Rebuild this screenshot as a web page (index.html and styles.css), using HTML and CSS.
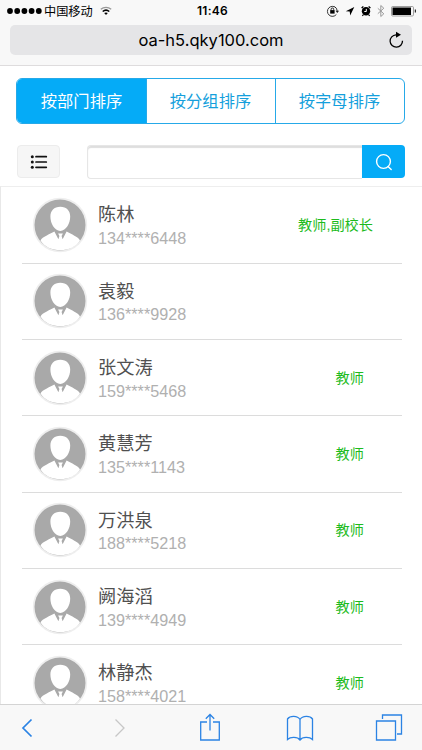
FILE: index.html
```html
<!DOCTYPE html>
<html lang="zh-CN">
<head>
<meta charset="utf-8">
<title>oa-h5.qky100.com</title>
<link rel="stylesheet" href="styles.css">
</head>
<body>
<svg width="0" height="0" class="defs">
  <symbol id="avatar" viewBox="0 0 56 56">
    <circle cx="28" cy="28" r="27.200" fill="#eeeeee"/>
    <circle cx="28" cy="28" r="25.500" fill="#a9a9a9"/>
    <path d="M28.300 9.800c6.300 0 9.900 4 9.900 9.800 0 7-4 14.300-9.900 14.300s-9.900-7.300-9.900-14.300c0-5.800 3.600-9.800 9.900-9.800z" fill="#fff"/>
    <path d="M8.500 43.500c2-4 9-6 13.900-9l4 7.700 1-3.200-1.300-2.400h4.800L29.600 39l1 3.200 4-7.700c4.900 3 11.400 5 13.400 9-4 6.300-11 9.700-19.700 9.700s-15.800-3.400-19.800-9.700z" fill="#fff"/>
  </symbol>
</svg>
<div class="screen">
  <header class="chrome">
    <div class="status">
      <div class="carrier">
        <svg width="36" height="8" viewBox="0 0 36 8"><circle cx="3" cy="4" r="2.900"/><circle cx="10.200" cy="4" r="2.900"/><circle cx="17.400" cy="4" r="2.900"/><circle cx="24.600" cy="4" r="2.900"/><circle cx="31.800" cy="4" r="2.900"/></svg>
        <span class="carrier-name">中国移动</span>
        <svg class="wifi" width="12" height="10" viewBox="0 0 12 10" fill="none" stroke="#000"><path d="M.8 3.300c3-2.700 7.400-2.700 10.400 0" stroke="#999" stroke-width="1.200"/><path d="M2.700 5.500c2-1.700 4.600-1.700 6.600 0" stroke-width="1.500"/><path d="M4.200 7.100c1-.9 2.600-.9 3.600 0L6 9z" fill="#000" stroke="none"/></svg>
      </div>
      <time class="clock">11:46</time>
      <svg class="indicators" width="90" height="14" viewBox="0 0 90 14" fill="none" stroke="#222">
        <path d="M10.300 4.200a5 5 0 1 0 .1 6.200M8.600 2.700a5 5 0 0 1 2.600 4.300" stroke-width=".9"/><path d="M9.500 6.800h3.600l-1.800 2.300z" fill="#222" stroke="none"/><path d="M5.100 6.300V5.300a1.300 1.300 0 0 1 2.600 0v1"/><path d="M4.200 6.100h4.400v3.500H4.200z" fill="#000" stroke="none"/>
        <path d="M28.300 3l-8.500 4.200 3.900.4.500 4z" fill="#000" stroke="none"/>
        <circle cx="40" cy="7.200" r="4.200" fill="#000" stroke="none"/><path d="M35.600 4l1.800-1.600M42.600 2.400l1.800 1.600M37.200 10.900l-.8 1M42.800 10.900l.8 1" stroke="#000" stroke-width="1.300"/><path d="M40.300 4.900v2.600h-2" stroke="#fff"/>
        <path d="M51.800 4.300l6 5.500-3 2.700v-11l3 2.700-6 5.500" stroke="#999"/>
        <rect x="65.500" y="2.500" width="22" height="9.500" rx="1.200" stroke="#888" stroke-width=".8"/><rect x="66.500" y="3.500" width="18.500" height="7.500" fill="#000" stroke="none"/><path d="M89.300 5.500v3" stroke="#000"/>
      </svg>
    </div>
    <div class="address">
      <span class="url">oa-h5.qky100.com</span>
      <svg class="reload" width="18" height="18" viewBox="0 0 18 18" fill="none" stroke="#000" stroke-width="1.300"><path d="M11 3.800H9a6.200 6.200 0 1 0 6.500 6"/><path d="M9 .8l5 3-5 3z" fill="#000" stroke="none"/></svg>
    </div>
  </header>
  <main class="page">
    <nav class="tabs"><a class="tab active">按部门排序</a><a class="tab">按分组排序</a><a class="tab">按字母排序</a></nav>
    <div class="tools">
      <button class="menu"><svg width="18" height="16" viewBox="0 0 18 16" stroke="#111" stroke-width="1.700" stroke-linecap="round"><path d="M6 2.700h10.300M6 8h10.300M6 13.300h10.300"/><g stroke="none" fill="#111"><circle cx="2.300" cy="2.700" r="1.500"/><circle cx="2.300" cy="8" r="1.500"/><circle cx="2.300" cy="13.300" r="1.500"/></g></svg></button>
      <div class="search">
        <div class="field"></div>
        <button class="go"><svg width="18" height="18" viewBox="0 0 18 18" fill="none" stroke="#fff" stroke-width="1.400" stroke-linecap="round"><circle cx="8.500" cy="8.500" r="6.900"/><path d="M13 13.500l3.200 3"/></svg></button>
      </div>
    </div>
    <ul class="list">
      <li class="row"><svg class="avatar"><use href="#avatar"/></svg><div class="person"><div class="name">陈林</div><div class="phone">134****6448</div></div><div class="role wide">教师,副校长</div></li>
      <li class="row"><svg class="avatar"><use href="#avatar"/></svg><div class="person"><div class="name">袁毅</div><div class="phone">136****9928</div></div></li>
      <li class="row"><svg class="avatar"><use href="#avatar"/></svg><div class="person"><div class="name">张文涛</div><div class="phone">159****5468</div></div><div class="role">教师</div></li>
      <li class="row"><svg class="avatar"><use href="#avatar"/></svg><div class="person"><div class="name">黄慧芳</div><div class="phone">135****1143</div></div><div class="role">教师</div></li>
      <li class="row"><svg class="avatar"><use href="#avatar"/></svg><div class="person"><div class="name">万洪泉</div><div class="phone">188****5218</div></div><div class="role">教师</div></li>
      <li class="row"><svg class="avatar"><use href="#avatar"/></svg><div class="person"><div class="name">阙海滔</div><div class="phone">139****4949</div></div><div class="role">教师</div></li>
      <li class="row"><svg class="avatar"><use href="#avatar"/></svg><div class="person"><div class="name">林静杰</div><div class="phone">158****4021</div></div><div class="role">教师</div></li>
    </ul>
  </main>
  <footer class="toolbar">
    <svg width="12" height="20" viewBox="0 0 12 20"><path d="M10.500 1.500L2 10l8.500 8.500" stroke-width="1.700"/></svg>
    <svg class="disabled" width="12" height="20" viewBox="0 0 12 20"><path d="M1.500 1.500L10 10l-8.500 8.500" stroke-width="1.300"/></svg>
    <svg class="raised" width="20" height="28" viewBox="0 0 20 28"><path d="M7 9H.7v18h18.600V9H13M10 17.500V1.500M5.800 5.700L10 1.500l4.200 4.200"/></svg>
    <svg width="28" height="28" viewBox="0 0 28 28"><path d="M14 5.500C11.500 1.500 4 1.500 1.500 5v20.500c3-2.800 10-2.800 12.500.5 2.500-3.300 9.500-3.300 12.500-.5V5C24 1.500 16.500 1.500 14 5.500zV26"/></svg>
    <svg class="raised" width="28" height="28" viewBox="0 0 28 28"><path d="M1.500 8h19v19h-19zM7.500 6V2h19v19H22"/></svg>
  </footer>
</div>
</body>
</html>
```
FILE: styles.css
```css
* { box-sizing: border-box; }
body { margin: 0; background: #fff; font-family: "Liberation Sans", "Noto Sans CJK SC", sans-serif; }
svg { display: block; flex-shrink: 0; }
.defs { position: absolute; }
.screen { width: 422px; height: 750px; display: flex; flex-direction: column; overflow: hidden; }
.chrome { flex: 0 0 66px; background: #f8f8f8; border-bottom: 1px solid #dedcdd; }
.status { height: 25px; padding: 0 6px 3px 7px; display: grid; grid-template-columns: 1fr auto 1fr; align-items: center; }
.carrier { display: flex; align-items: center; }
.carrier-name { font-size: 12.2px; line-height: 18px; margin: 1px 0 0 1px; }
.wifi { margin-left: 7px; }
.clock { font: 600 12px/18px Inter, sans-serif; letter-spacing: .3px; padding-left: 2px; }
.indicators { justify-self: end; }
.address { height: 30px; margin: 0 10px; padding: 0 7px 0 25px; border-radius: 5px; background: #e5e5e7; display: flex; align-items: center; }
.url { flex: 1; text-align: center; font: 16.5px/30px Inter, sans-serif; }
.page { flex: 1; min-height: 0; overflow: hidden; }
.tabs { height: 46px; margin: 12px 17px 0 16px; display: grid; grid-template-columns: 129px 129px 1fr; border: 1px solid #26a9e8; border-radius: 6px; overflow: hidden; }
.tab { display: flex; align-items: center; justify-content: center; color: #159fdc; font-size: 16.3px; line-height: 24px; }
.tab + .tab { border-left: 1px solid #26a9e8; padding-right: 1px; }
.tab.active { background: #05abf7; color: #fff; }
.tools { display: flex; margin: 21px 17px 0; height: 34px; justify-content: space-between; }
button { border: 0; padding: 0; display: flex; align-items: center; justify-content: center; }
.menu { width: 43px; height: 33px; border: 1px solid #ececec; border-radius: 4px; background: #f6f6f6; }
.search { width: 318px; display: flex; }
.field { flex: 1; height: 34px; border: 1px solid #e6e6e6; border-right: 0; border-radius: 4px 0 0 4px; box-shadow: inset 0 2px 1px #dedede; }
.go { width: 43px; height: 33px; background: #05abf7; border-radius: 0 4px 4px 0; }
.list { list-style: none; margin: 7px 0 0; padding: .2px 20px 0 21px; border-top: 1px solid #eee; border-left: 1px solid #e8e8e8; }
.row { height: 76.35px; padding-left: 10px; display: flex; align-items: center; border-bottom: 1px solid #dcdcdc; }
.avatar { width: 56px; height: 56px; }
.person { margin: 2px auto 0 10px; }
.name { font-size: 18.2px; line-height: 24px; color: #505050; position: relative; top: .5px; }
.phone { font-size: 16.2px; line-height: 22px; color: #b0b0b0; }
.role { font-size: 14.2px; line-height: 20px; color: #1dbb1d; margin-right: 38px; }
.role.wide { margin-right: 29px; }
.toolbar { flex: 0 0 46px; background: #f8f8f8; border-top: 1px solid #d4d4d4; display: grid; grid-template-columns: 54px 132px 48px 132px 46px; align-items: center; justify-items: center; }
.toolbar svg { fill: none; stroke: #2b83e4; stroke-width: 1.300; }
.toolbar .disabled { stroke: #c7c7c7; }
.toolbar .raised { margin-bottom: 2px; }
```
